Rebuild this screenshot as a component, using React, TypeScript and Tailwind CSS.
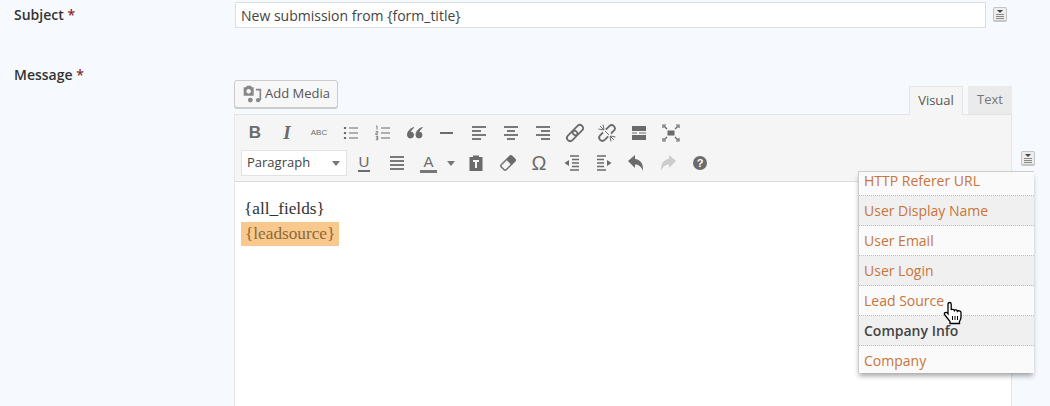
import type { ReactNode } from "react";

const OPEN = "font-['Open_Sans',sans-serif]";

const MENU_ITEMS = [
  { label: "HTTP Referer URL" },
  { label: "User Display Name" },
  { label: "User Email" },
  { label: "User Login" },
  { label: "Lead Source" },
  { label: "Company Info", header: true },
  { label: "Company" },
];

function Ico({ children, color = "#6b6b6b" }: { children: ReactNode; color?: string }) {
  return (
    <svg width="20" height="20" viewBox="0 0 20 20" fill="none" stroke={color} strokeWidth="2" style={{ color }}>
      {children}
    </svg>
  );
}

function Btn({ children, w = "w-8" }: { children: ReactNode; w?: string }) {
  return <div className={`${w} h-[26px] flex items-center justify-center shrink-0`}>{children}</div>;
}

function MergeIcon({ className }: { className?: string }) {
  return (
    <div className={`w-[14px] h-[15px] rounded-[2px] border border-[#c4c4c4] border-b-2 bg-[#ececec] flex flex-col items-center pt-[2px] gap-[1px] ${className ?? ""}`}>
      <div className="w-0 h-0 border-x-[3px] border-x-transparent border-t-[3px] border-t-[#444]" />
      <div className="w-2 h-px bg-[#888]" />
      <div className="w-2 h-px bg-[#888]" />
      <div className="w-2 h-px bg-[#888]" />
    </div>
  );
}

function Lines({ rows }: { rows: [number, number][] }) {
  return (
    <Ico>
      {rows.map(([x1, x2], i) => (
        <path key={i} d={`M${x1} ${4 + i * 4}H${x2}`} strokeWidth="1.8" />
      ))}
    </Ico>
  );
}

function FirstRow() {
  return (
    <div className="flex h-[26px] pl-[4px] items-center">
      <Btn><span className="font-['Liberation_Sans',sans-serif] text-[17px] font-bold text-[#6b6b6b]">B</span></Btn>
      <Btn><span className="font-['Liberation_Serif',serif] text-[19px] font-bold italic text-[#6b6b6b]">I</span></Btn>
      <Btn><span className="font-['Liberation_Sans',sans-serif] text-[8px] text-[#6b6b6b]">ABC</span></Btn>
      <Btn>
        <Ico>
          <path d="M8 5h9M8 10h9M8 15h9" strokeWidth="1.2" />
          <path d="M4 4v2M4 9v2M4 14v2" strokeWidth="2.2" />
        </Ico>
      </Btn>
      <Btn>
        <Ico>
          <path d="M8 5h9M8 10h9M8 15h9" strokeWidth="1.2" />
          <path d="M3 3.5l1-.7v4M2.8 8.5h2v1.6h-2v1.6h2.2M2.8 13.5h2v1.7h-1.4h1.4v1.6h-2" strokeWidth="0.8" />
        </Ico>
      </Btn>
      <Btn>
        <Ico>
          <path d="M9 4.5C5.5 5.5 2.5 8 2.5 12a3 3 0 1 0 3-3M17.5 4.5C14 5.5 11 8 11 12a3 3 0 1 0 3-3" fill="#6b6b6b" strokeWidth="1" />
        </Ico>
      </Btn>
      <Btn><Ico><path d="M3 10h13" /></Ico></Btn>
      <Btn><Lines rows={[[3, 17], [3, 12], [3, 17], [3, 12]]} /></Btn>
      <Btn><Lines rows={[[3, 17], [6, 14], [3, 17], [6, 14]]} /></Btn>
      <Btn><Lines rows={[[3, 17], [8, 17], [3, 17], [8, 17]]} /></Btn>
      <Btn>
        <Ico>
          <g transform="rotate(-45 10 10)">
            <rect x="0" y="6.8" width="12" height="6.4" rx="3.2" strokeWidth="1.8" />
            <rect x="8" y="6.8" width="12" height="6.4" rx="3.2" strokeWidth="1.8" />
          </g>
        </Ico>
      </Btn>
      <Btn>
        <Ico>
          <g transform="rotate(-45 10 10)">
            <path d="M7.5 6.8H3.5a3.2 3.2 0 0 0 0 6.4h5M12.5 13.2h4a3.2 3.2 0 0 0 0-6.400h-5" strokeWidth="1.8" />
          </g>
          <path d="M1.5 6l5 1M6 1.5l1 5M3 3l4 4M18.5 14l-5-1M14 18.5l-1-5M17 17l-4-4M8 8l4 4" strokeWidth="1" />
        </Ico>
      </Btn>
      <Btn>
        <Ico>
          <path d="M3 5.5h14" strokeWidth="5" />
          <path d="M3 10h5M10 10h7" strokeWidth="1" />
          <path d="M3 14.5h14" strokeWidth="5" />
        </Ico>
      </Btn>
      <Btn>
        <Ico>
          <rect x="6.5" y="7.5" width="7" height="5" fill="#6b6b6b" stroke="none" />
          <path d="M3 3l3 3M17 3l-3 3M3 17l3-3M17 17l-3-3" strokeWidth="1.4" />
          <path d="M2 5V2h3M18 5V2h-3M2 15v3h3M18 15v3h-3" strokeWidth="1.2" />
        </Ico>
      </Btn>
    </div>
  );
}

function SecondRow() {
  return (
    <div className="flex h-[26px] pl-[6px] mt-[4px] items-center">
      <div className={`w-[106px] h-[26px] bg-white border border-[#e2e2e2] flex items-center justify-between pl-[5px] pr-[6px] text-[13px] text-[#444] shrink-0 ${OPEN}`}>
        Paragraph
        <span className="w-0 h-0 border-x-[4px] border-x-transparent border-t-[5px] border-t-[#777]" />
      </div>
      <Btn w="w-[34px]">
        <span className="font-['Liberation_Sans',sans-serif] text-[15px] leading-[16px] text-[#6b6b6b] border-b-2 border-[#6b6b6b] px-px">U</span>
      </Btn>
      <Btn>
        <Lines rows={[[3, 17], [3, 17], [3, 17], [3, 17]]} />
      </Btn>
      <Btn w="w-[31px]">
        <span className="font-['Liberation_Sans',sans-serif] text-[15px] leading-[16px] text-[#6b6b6b] border-b-[3px] border-[#777] px-[3px]">A</span>
      </Btn>
      <Btn w="w-[14px]">
        <span className="w-0 h-0 border-x-[4px] border-x-transparent border-t-[5px] border-t-[#777]" />
      </Btn>
      <Btn w="w-[36px]">
        <Ico>
          <path d="M7 4V2.5h6V4h3.5v14h-13V4z" fill="#6b6b6b" stroke="none" />
          <path d="M7 8h6M10 8v7" stroke="#f5f5f5" strokeWidth="2" />
        </Ico>
      </Btn>
      <Btn w="w-[28px]">
        <Ico>
          <g transform="rotate(-45 10 10)">
            <rect x="2.5" y="6.5" width="15" height="7" rx="1.5" strokeWidth="1.4" />
            <rect x="11" y="6.5" width="6.5" height="7" fill="#6b6b6b" stroke="none" />
          </g>
        </Ico>
      </Btn>
      <Btn w="w-[34px]"><span className="font-['Liberation_Sans',sans-serif] text-[20px] text-[#6b6b6b]">Ω</span></Btn>
      <Btn>
        <Ico>
          <path d="M8 3h9M10 6.5h7M10 10h7M10 13.5h7M8 17h9" strokeWidth="1.7" />
          <path d="M7 7L2.5 10 7 13z" fill="#6b6b6b" stroke="none" />
        </Ico>
      </Btn>
      <Btn>
        <Ico>
          <path d="M3 3h9M3 6.5h7M3 10h7M3 13.5h7M3 17h9" strokeWidth="1.7" />
          <path d="M13 7l4.5 3-4.500 3z" fill="#6b6b6b" stroke="none" />
        </Ico>
      </Btn>
      <Btn>
        <Ico>
          <path d="M2 8L9 2v4c5 .5 8.5 4 8 12-1.500-4-4-6.500-8-6.500V15z" fill="#6b6b6b" stroke="none" />
        </Ico>
      </Btn>
      <Btn>
        <Ico>
          <path d="M18 8L11 2v4c-5 .5-8.500 4-8 12 1.500-4 4-6.500 8-6.500V15z" fill="#ccc" stroke="none" />
        </Ico>
      </Btn>
      <Btn>
        <div className="w-[14px] h-[14px] rounded-full bg-[#6b6b6b] text-white text-[11px] font-bold leading-[14px] text-center font-['Liberation_Sans',sans-serif]">?</div>
      </Btn>
    </div>
  );
}

function TagMenu() {
  return (
    <div className={`absolute left-[858px] top-[171px] w-[176px] h-[202px] overflow-hidden border-l border-t border-[#ccc] bg-[#fafafa] shadow-[0_4px_5px_-1px_rgba(0,0,0,0.35)] text-[14px] ${OPEN}`}>
      <div className="-mt-[6px]">
        {MENU_ITEMS.map((item, i) => (
          <div
            key={item.label}
            className={`h-[30px] pl-[5px] flex items-center border-b border-dotted border-[#bbb] last:border-transparent ${i % 2 === 1 ? "bg-[#f0f0f0]" : ""} ${item.header ? "font-semibold text-[#444]" : "text-[#c9743a]"}`}
          >
            {item.label}
          </div>
        ))}
      </div>
    </div>
  );
}

function HandCursor() {
  return (
    <svg className="absolute left-[943px] top-[301px]" width="22" height="24" viewBox="0 0 22 24">
      <path
        d="M6.5 1.5c1 0 1.700.7 1.700 1.700V9c.4-1 2.800-1 3.200.5.500-1 2.800-.8 3 .7.700-.8 3.600-.5 3.600 1.300v4.500c0 2-.7 3-1.500 4.500v2H7v-2L1.500 13.500c-1-1.500 1.500-3 3-1.500L5 12.700V3.200c0-1 .6-1.700 1.500-1.700z"
        fill="#fff"
        stroke="#000"
        strokeWidth="1.3"
      />
      <path d="M9.5 15v4M12 15v4M14.5 15v4" stroke="#000" strokeWidth="1" />
    </svg>
  );
}

export default function App() {
  return (
    <div className={`relative w-[1050px] h-[406px] overflow-hidden bg-[#f6fafe] ${OPEN}`}>
      {/* Subject */}
      <div className="flex pt-[2px]">
        <div className="w-[235px] pl-[14px] pt-[2px] text-[14px] font-semibold text-[#333]">
          Subject <span className="text-[#8a2b2b]">*</span>
        </div>
        <div className="w-[751px] h-[26px] bg-white border border-[#ddd] pl-[5px] flex items-center text-[14px] text-[#444]">
          New submission from {"{form_title}"}
        </div>
        <MergeIcon className="ml-[7px] mt-[5px]" />
      </div>

      {/* Message */}
      <div className="flex mt-[36px]">
        <div className="w-[234px] pl-[14px] text-[14px] font-semibold text-[#333]">
          Message <span className="text-[#8a2b2b]">*</span>
        </div>
        <div className="w-[778px]">
          <div className="flex justify-between items-end h-[50px]">
            <div className="mb-[6px] w-[104px] h-[28px] rounded-[3px] border border-[#ccc] bg-[#f7f7f7] flex items-center pl-[7px] gap-[3px] text-[13px] text-[#555] shadow-[0_1px_0_#ccc]">
              <svg width="20" height="20" viewBox="0 0 18 18">
                <path d="M1.5 3h2l1-1.500h3.500l1 1.500h1.500v7.500h-9z" fill="#888" />
                <circle cx="6" cy="6.5" r="2" fill="#f7f7f7" />
                <path d="M12.5 5h4v9.500" stroke="#888" strokeWidth="1.5" fill="none" />
                <circle cx="14.5" cy="14.5" r="2" fill="#888" />
                <circle cx="7.5" cy="14.5" r="2.2" fill="#888" />
              </svg>
              Add Media
            </div>
            <div className="flex text-[13px] pr-0">
              <div className="h-[29px] w-[54px] bg-[#f5f5f5] border border-[#e4e4e4] border-b-0 flex items-center justify-center text-[#555] -mb-px z-10">
                Visual
              </div>
              <div className="h-[28px] w-[44px] ml-[5px] bg-[#ebebeb] flex items-center justify-center text-[#777]">
                Text
              </div>
            </div>
          </div>
          <div className="border border-[#e4e4e4] bg-white h-[300px]">
            <div className="bg-[#f5f5f5] border-b border-[#ddd] h-[67px] pt-[5px]">
              <FirstRow />
              <SecondRow />
            </div>
            <div className="pt-[14px] pl-[6px] font-['Liberation_Serif',serif] text-[17.25px] text-[#333]">
              <div className="px-[3px] leading-[25px]">{"{all_fields}"}</div>
              <span className="inline-block px-[4px] leading-[24px] bg-[#f8c88c] text-[#8a6a3c]">{"{leadsource}"}</span>
            </div>
          </div>
        </div>
        <MergeIcon className="ml-[9px] mt-[87px]" />
      </div>

      <TagMenu />
      <HandCursor />
    </div>
  );
}
